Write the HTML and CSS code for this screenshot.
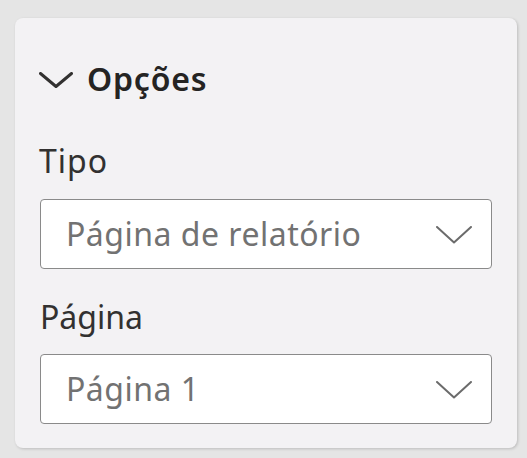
FILE: index.html
```html
<!DOCTYPE html>
<html lang="pt">
<head>
<meta charset="utf-8">
<title>Opções</title>
<link rel="stylesheet" href="styles.css">
</head>
<body>
<div class="card">
  <div class="section-header">
    <svg class="header-chevron" viewBox="0 0 34 16" width="34" height="16" aria-hidden="true">
      <path d="M1.5 1.5 L17 14.5 L32.5 1.5" fill="none" stroke="#323130" stroke-width="3" stroke-linecap="round" stroke-linejoin="round"/>
    </svg>
    <span class="section-title">Opções</span>
  </div>
  <div class="field-label label-first">Tipo</div>
  <div class="dropdown">
    <span class="dropdown-value">Página de relatório</span>
    <svg class="dropdown-chevron" viewBox="0 0 36 18" width="36" height="18" aria-hidden="true">
      <path d="M1 1 L18 16.5 L35 1" fill="none" stroke="#6b6b6b" stroke-width="2" stroke-linecap="round" stroke-linejoin="round"/>
    </svg>
  </div>
  <div class="field-label label-second">Página</div>
  <div class="dropdown">
    <span class="dropdown-value">Página 1</span>
    <svg class="dropdown-chevron" viewBox="0 0 36 18" width="36" height="18" aria-hidden="true">
      <path d="M1 1 L18 16.5 L35 1" fill="none" stroke="#6b6b6b" stroke-width="2" stroke-linecap="round" stroke-linejoin="round"/>
    </svg>
  </div>
</div>
</body>
</html>
```

FILE: styles.css
```css
html, body {
  margin: 0;
  padding: 0;
}

body {
  background: #e5e5e5;
  font-family: "Noto Sans", "Open Sans", "Liberation Sans", sans-serif;
  padding: 18px 0 0 15px;
  width: 527px;
  height: 458px;
  box-sizing: border-box;
}

.card {
  width: 502px;
  height: 430px;
  box-sizing: border-box;
  background: #f3f2f4;
  border-radius: 8px;
  box-shadow: 1px 1px 3px rgba(0, 0, 0, 0.18);
  padding: 41px 25px 23px 25px;
  display: flex;
  flex-direction: column;
}

.section-header {
  display: flex;
  align-items: center;
  height: 40px;
  margin-left: -1px;
}

.header-chevron {
  flex: none;
  margin-top: 2px;
}

.section-title {
  margin-left: 14px;
  font-size: 32px;
  line-height: 40px;
  font-weight: 600;
  letter-spacing: 0.8px;
  color: #252423;
}

.field-label {
  font-size: 32px;
  line-height: 40px;
  color: #323130;
}

.label-first {
  margin-top: 42px;
  margin-bottom: 18px;
  letter-spacing: 1px;
  margin-left: -1px;
}

.label-second {
  margin-top: 28px;
  margin-bottom: 17px;
}

.dropdown {
  height: 70px;
  box-sizing: border-box;
  background: #ffffff;
  border: 1.5px solid #8a8a8a;
  border-radius: 4px;
  display: flex;
  align-items: center;
  justify-content: space-between;
  padding: 0 19px 0 25px;
}

.dropdown-value {
  font-size: 32px;
  line-height: 40px;
  letter-spacing: 0.5px;
  color: #727272;
}

.dropdown-chevron {
  flex: none;
  margin-top: 1px;
}
```
